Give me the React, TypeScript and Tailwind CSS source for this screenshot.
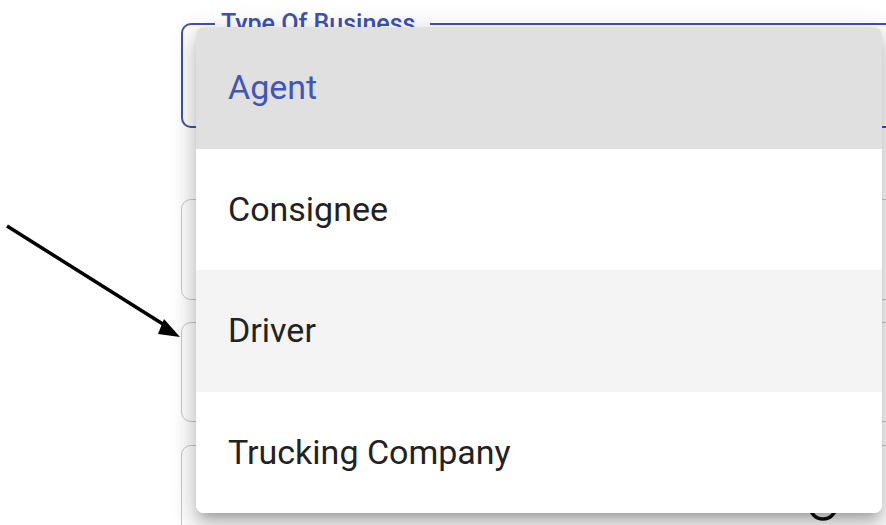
import React from "react";

const options = ["Agent", "Consignee", "Driver", "Trucking Company"];

function PointerArrow() {
  return (
    <svg className="absolute left-0 top-0 pointer-events-none" width="886" height="525">
      <line x1="7" y1="226" x2="166" y2="326" stroke="#000" strokeWidth="3.5" />
      <polygon points="164,319 180,337 158,334" fill="#000" />
    </svg>
  );
}

function BusinessMenu() {
  return (
    <ul className="absolute left-[196px] top-[27px] w-[686px] h-[486px] flex flex-col bg-white rounded-lg overflow-hidden shadow-[0_8px_10px_-5px_rgba(0,0,0,0.2),0_14px_20px_2px_rgba(0,0,0,0.14),0_5px_26px_4px_rgba(0,0,0,0.12)]">
      {options.map((opt) => {
        const selected = opt === "Agent";
        const hovered = opt === "Driver";
        return (
          <li
            key={opt}
            className={
              "flex-1 flex items-center pl-8 text-[34px] " +
              (selected
                ? "bg-[#e0e0e0] text-[#4255b8]"
                : hovered
                ? "bg-[#f4f4f4] text-[#222]"
                : "bg-white text-[#222]")
            }
          >
            {opt}
          </li>
        );
      })}
    </ul>
  );
}

export default function App() {
  return (
    <div
      className="relative w-[886px] h-[525px] overflow-hidden bg-white"
      style={{ fontFamily: "Roboto, 'Noto Sans', sans-serif" }}
    >
      <div className="pl-[181px] pt-[11px] flex flex-col w-[920px]">
        <fieldset className="h-[117px] border-2 border-[#3f51b5] rounded-[10px] m-0 p-0">
          <legend className="ml-[32px] pl-[6px] pr-[15px] text-[25px] leading-[25px] font-medium text-[#3f51b5]">
            Type Of Business
          </legend>
        </fieldset>
        <div className="mt-[71px] h-[101px] border border-[#c8c8c8] rounded-[10px]" />
        <div className="mt-[22px] h-[100px] border border-[#c8c8c8] rounded-[10px]" />
        <div className="mt-[23px] h-[100px] border border-[#c8c8c8] rounded-[10px] flex justify-start pl-[625px] pt-[44px]">
          <svg width="32" height="32" viewBox="0 0 32 32">
            <circle cx="16" cy="16" r="13" fill="none" stroke="#111" strokeWidth="3.5" />
          </svg>
        </div>
      </div>
      <BusinessMenu />
      <PointerArrow />
    </div>
  );
}
